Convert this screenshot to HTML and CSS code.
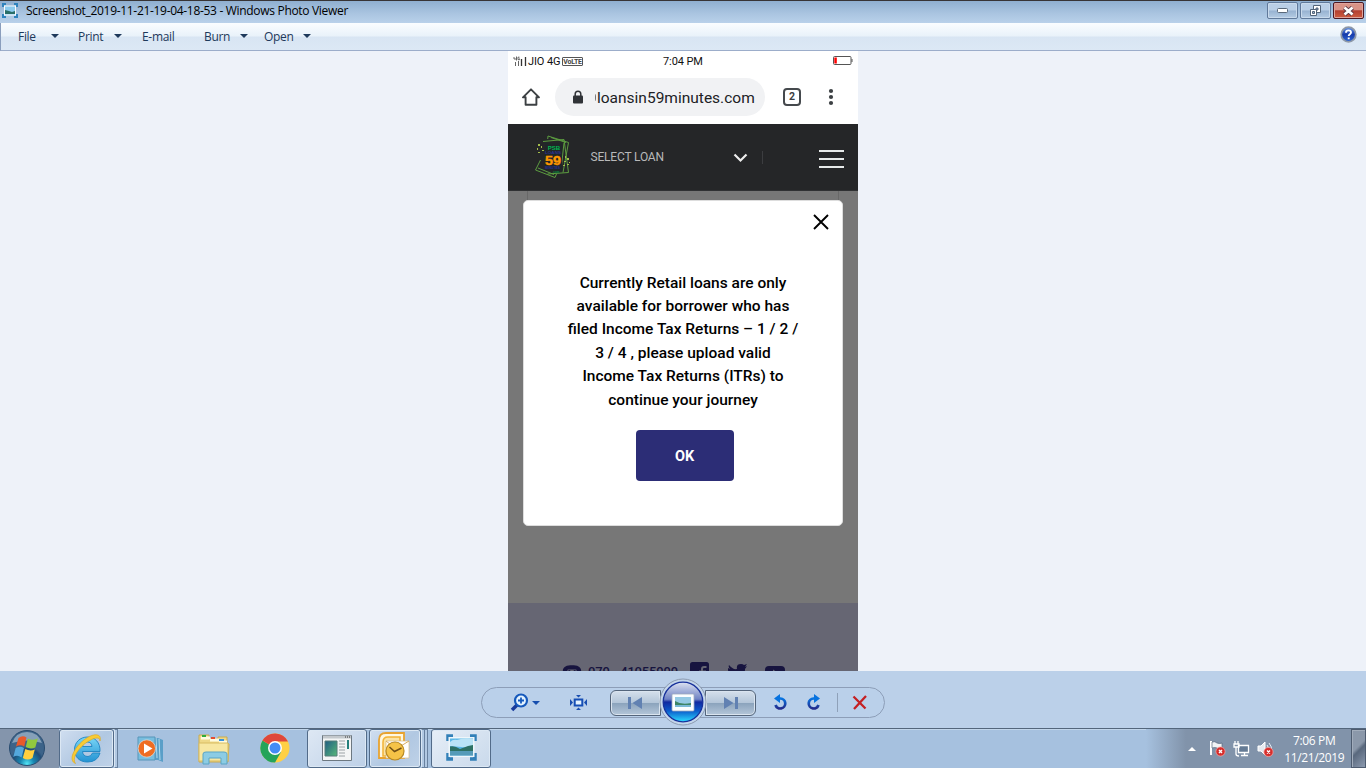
FILE: index.html
```html
<!DOCTYPE html>
<html lang="en">
<head>
<meta charset="utf-8">
<title>Windows Photo Viewer</title>
<link rel="stylesheet" href="styles.css">
</head>
<body>
<div class="screen">
  <header class="titlebar">
    <svg class="app-icon" width="16" height="15" viewBox="0 0 16 15"><path d="M1 4V1h3M12 1h3v3M15 11v3h-3M4 14H1v-3" fill="none" stroke="#2f83bd" stroke-width="2"/><path d="M2 2.500h12v10H2z" fill="#f8fcff"/><path d="M3 3.500h10v8H3z" fill="#8ccbee"/><path d="M3 7l4 1 3 1 3-1v3H3z" fill="#296e68"/></svg>
    <span class="window-title">Screenshot_2019-11-21-19-04-18-53 - Windows Photo Viewer</span>
    <div class="caption-buttons">
      <span class="caption"><svg width="12" height="6"><rect x=".5" y=".5" width="10" height="4" rx="1" fill="#fff" stroke="#596879"/></svg></span>
      <span class="caption"><svg width="13" height="12" viewBox="0 0 13 12"><path d="M4.500.5h7v7h-7z" fill="#fff" stroke="#53657a"/><path d="M7 3h2v2H7z" fill="#829ab7" stroke="#53657a"/><path d="M1.500 4.500h6v6h-6z" fill="#fff" stroke="#53657a"/><path d="M3.500 6.500h2v2h-2z" fill="#9bb3ce" stroke="#53657a"/></svg></span>
      <span class="caption close"><svg width="13" height="10" viewBox="0 0 13 10"><path d="M2.500 1.500l8 7m0-7l-8 7" stroke="#5c3a45" stroke-width="4.400"/><path d="M2.500 1.500l8 7m0-7l-8 7" stroke="#fff" stroke-width="2.600"/></svg></span>
    </div>
  </header>
  <nav class="menubar">
    <span class="menu m-file"><span>File</span><i class="arrow"></i></span>
    <span class="menu m-print"><span>Print</span><i class="arrow"></i></span>
    <span class="menu m-email"><span>E-mail</span></span>
    <span class="menu m-burn"><span>Burn</span><i class="arrow"></i></span>
    <span class="menu m-open"><span>Open</span><i class="arrow"></i></span>
    <svg class="help" width="17" height="17" viewBox="0 0 17 17"><defs><linearGradient id="hg" x2="0" y2="1"><stop stop-color="#6b9bea"/><stop offset=".5" stop-color="#173bab"/><stop offset="1" stop-color="#2d67d5"/></linearGradient></defs><circle cx="8.500" cy="8.500" r="7.300" fill="url(#hg)" stroke="#8d98a8" stroke-width="1.800"/><path d="M6 6.700c0-3.200 5-3 5-.2 0 1.800-2.300 1.800-2.300 3.600M8.700 11.500v1.700" fill="none" stroke="#fff" stroke-width="1.900"/></svg>
  </nav>

  <main class="viewer">
    <div class="phone">
      <div class="statusbar">
        <svg class="signal" width="14" height="11" viewBox="0 0 14 11"><path d="M1 1v2h2M3.500.5v4M6.500 1.200H5v2.500h1.500V2.500M2.500 6v4M5.500 5v5" fill="none" stroke="#555" stroke-width=".9"/><path d="M8.500 3v7M12.500 1v9" stroke="#333" stroke-width="1.300"/></svg>
        <span class="carrier">JIO 4G</span>
        <span class="volte">VoLTE</span>
        <span class="phone-time">7:04 PM</span>
        <svg class="battery" width="20" height="10"><rect x=".5" y=".5" width="17.500" height="8" rx="1" fill="#fff" stroke="#555"/><path d="M19 3v3" stroke="#555"/><path d="M1.300 1.500h2.500v6H1.300z" fill="#f00"/></svg>
      </div>
      <div class="browserbar">
        <svg class="home" width="18" height="18" viewBox="0 0 18 18"><path d="M9 1.300L1 9.300H3.600v7.400h10.800V9.300h2.600z" fill="none" stroke="#3c4043" stroke-width="1.900" stroke-linejoin="round"/></svg>
        <div class="address">
          <svg width="12" height="14" viewBox="0 0 12 14"><path d="M3.200 6V4a2.800 2.800 0 015.600 0v2" fill="none" stroke="#303337" stroke-width="1.500"/><rect x="1" y="5.500" width="10" height="8" rx="1" fill="#303337"/></svg>
          <i class="cut-letter"></i><span class="url">loansin59minutes.com</span>
        </div>
        <span class="tabs">2</span>
        <svg class="dots" width="6" height="18" fill="#3c4043"><circle cx="3" cy="3" r="2.100"/><circle cx="3" cy="9" r="2.100"/><circle cx="3" cy="15" r="2.100"/></svg>
      </div>
      <div class="sitebar">
        <svg class="psb" width="38" height="46" viewBox="0 0 38 46"><g fill="none" stroke="#5c9c40" stroke-width="1"><path d="M9 7.500L30 5.500l4.500 33L13.500 40"/><path d="M14 2l20.500 6.500L29 38.500M14 2l-.3 3M6.500 26L1.500 36l19.500 7.500 1.500-3.500M17 3.500l15 5M4 34l16 6.500"/><path d="M30 9l-3 27"/></g><path d="M11 9l17 0v28l-17-1z" fill="#202628"/><g fill="#a3bd4b"><path d="M4 10h2v2H4zm-1 4h1v2H3zm4-2h1v2H7zm1 4h2v1H8zm-4 2h2v1H4zM30 27h2v1h-2zm3-3h2v2h-2zm-2-2h1v2h-1zm4 6h1v1h-1zm-6 3h2v1h-2zm4-1h2v1h-2z"/></g><g font-family="Liberation Sans" font-weight="700" text-anchor="middle"><text x="20" y="15.500" font-size="6" textLength="12.500" lengthAdjust="spacingAndGlyphs" fill="#00b450">PSB</text><text x="19" y="20" font-size="3.800" textLength="16" lengthAdjust="spacingAndGlyphs" fill="#2c318f">LOANS</text><text x="19" y="30.500" font-size="12.500" textLength="16" lengthAdjust="spacingAndGlyphs" fill="#ff9700" stroke="#ff9700" stroke-width=".4">59</text><text x="18.500" y="35" font-size="3" textLength="15" lengthAdjust="spacingAndGlyphs" fill="#293197">MINUTES</text><text x="22" y="38.500" font-size="3" fill="#00903d">.com</text></g></svg>
        <span class="select">SELECT LOAN</span>
        <svg class="chevron" width="15" height="10" viewBox="0 0 15 10"><path d="M1.500 1.500L7.500 7.500l6-6" fill="none" stroke="#eee" stroke-width="2.200"/></svg>
        <i class="divider"></i>
        <span class="burger"><i></i><i></i><i></i></span>
      </div>
      <div class="page">
        <section class="dialog">
          <svg class="dismiss" width="16" height="16" viewBox="0 0 16 16"><path d="M1 1l14 14M15 1L1 15" stroke="#000" stroke-width="1.900"/></svg>
          <p class="message">Currently Retail loans are only<br>available for borrower who has<br>filed Income Tax Returns – 1 / 2 /<br>3 / 4 , please upload valid<br>Income Tax Returns (ITRs) to<br>continue your journey</p>
          <button class="ok">OK</button>
        </section>
      </div>
      <footer class="site-footer">
        <svg width="20" height="18" viewBox="0 0 20 18"><path d="M.8 7C.8 2.500 5 1.300 10 1.300s9.200 1.200 9.200 5.700l-4.200.8-.8-2.300H5.800L5 7.800z" fill="#17143f"/><path d="M6.500 6.500l3.500 2 3.500-2M4 10v7h12v-7" fill="none" stroke="#17143f" stroke-width="1.500"/></svg>
        <span class="phone-number">079 - 41055999</span>
        <svg class="fb" width="19" height="19" viewBox="0 0 19 19"><rect width="19" height="19" rx="2.500" fill="#17143f"/><path d="M16.500 5H14q-2 0-2 2v12M9 9.500h7" stroke="#666673" stroke-width="2" fill="none"/></svg>
        <svg class="tw" width="19" height="17" viewBox="0 0 19 17"><path d="M1 1q4 5 8 4-1-5 4-5 2 0 3 1l3-1-2 3 2-1-2 3c0 12-11 13-17 9q4 0 5-2-3 0-4-3h2Q-1 7 0 4l2 1Q0 3 1 1z" fill="#17143f"/></svg>
        <svg class="yt" width="20" height="15" viewBox="0 0 20 15"><rect width="20" height="15" rx="4" fill="#17143f"/><path d="M8 3.500l6 4-6 4z" fill="#666673"/></svg>
      </footer>
    </div>
  </main>

  <div class="controls">
    <div class="pill">
      <svg class="zoom" width="19" height="19" viewBox="0 0 19 19"><path d="M7 12l-5 5" stroke="#183a9b" stroke-width="3.500"/><circle cx="11" cy="7.500" r="6" fill="#e4f3ff" stroke="#1659bc" stroke-width="2.200"/><path d="M8 7.500h6m-3-3v6" stroke="#1659bc" stroke-width="1.800"/></svg>
      <i class="arrow blue"></i>
      <svg class="fit" width="17" height="15" viewBox="0 0 17 15"><rect x="4.700" y="4.500" width="7.600" height="6" fill="#e5f3ff" stroke="#164eb5" stroke-width="2"/><path d="M6 0h5L8.500 2.500zm0 15h5l-2.500-2.500zM0 4l3 3.500L0 11zm17 0l-3 3.500L17 11z" fill="#1a4eb0"/></svg>
      <span class="step prev"><svg width="15" height="12" viewBox="0 0 15 12"><path d="M0 0h3v12H0zm14 0v12L4.500 6z" fill="#6181b2"/></svg></span>
      <span class="step next"><svg width="15" height="12" viewBox="0 0 15 12"><path d="M1 0l9.500 6L1 12zm11 0h3v12h-3z" fill="#6181b2"/></svg></span>
      <svg class="rot-left" width="15" height="17" viewBox="0 0 15 17"><defs><linearGradient id="rg" x2="0" y2="1"><stop stop-color="#0874e1"/><stop offset="1" stop-color="#232c8c"/></linearGradient></defs><path d="M5 4.500h2.500a5 5 0 11-5 6.500" fill="none" stroke="url(#rg)" stroke-width="2.700"/><path d="M1 4.500L7 0v9z" fill="#0873df"/></svg>
      <svg class="rot-right" width="15" height="17" viewBox="0 0 15 17"><path d="M10 4.500H7.500a5 5 0 105 6.500" fill="none" stroke="url(#rg)" stroke-width="2.700"/><path d="M14 4.500L8 0v9z" fill="#0873df"/></svg>
      <i class="sep"></i>
      <svg class="delete" width="16" height="16" viewBox="0 0 16 16"><path d="M1.500 1.500l12 12M14 1L2 14" stroke="#c42023" stroke-width="2.300"/></svg>
    </div>
    <svg class="play" width="48" height="48" viewBox="0 0 48 48"><defs><linearGradient id="orb" x2="0" y2="1"><stop stop-color="#dce2f1"/><stop offset=".43" stop-color="#6f82c4"/><stop offset=".5" stop-color="#1129a0"/><stop offset=".72" stop-color="#0b5acb"/><stop offset="1" stop-color="#2cdcff"/></linearGradient></defs><circle cx="24" cy="24" r="23" fill="#c4d6eb" stroke="#8c9bb0"/><circle cx="24" cy="24" r="19.800" fill="url(#orb)" stroke="#17309b" stroke-width="1.300"/><rect x="13" y="16" width="22" height="17" rx="1" fill="#fafdff" stroke="#a0a9bc" stroke-width=".8"/><path d="M16 19h16v10H16z" fill="#94c9e4"/><path d="M16 23q6 4 16 2v4H16z" fill="#3d8465"/><path d="M16 27h16v2H16z" fill="#79b9d6"/></svg>
  </div>

  <footer class="taskbar">
    <div class="start"><svg width="38" height="38" viewBox="0 0 38 38"><defs><radialGradient id="st" cy=".95"><stop stop-color="#53e5f5"/><stop offset=".4" stop-color="#1786b1"/><stop offset=".85" stop-color="#204c76"/><stop offset="1" stop-color="#3c6389"/></radialGradient></defs><circle cx="19" cy="19" r="17.500" fill="url(#st)" stroke="#294c70"/><path d="M4 14Q8 3 19 3t15 11q-14-5-30 0z" fill="#b7c9d9" opacity=".6"/><path d="M10.500 9q4-3 8-.5l-2.300 9q-4-2.500-8.200 0z" fill="#e8592b"/><path d="M19.800 9.500q4 2.500 10 0l-2.500 9q-5 2-9.500-.5z" fill="#91c83e"/><path d="M7.700 19q4.300-2.500 8.300 0l-2.500 9.500q-4-3-8.300-.5z" fill="#54a8dc"/><path d="M17.300 20q4.700 2.500 9.500.5l-2.300 8.500q-4.700 3-9.700 0z" fill="#ffd03d"/></svg></div>
    <div class="task ie"><svg width="31" height="32" viewBox="0 0 31 32"><defs><linearGradient id="ieg" x2="0" y2="1"><stop stop-color="#79d6f7"/><stop offset="1" stop-color="#2493d2"/></linearGradient></defs><path fill-rule="evenodd" d="M29 20q-2.500 9-12.500 9C8 29 3.500 23.500 3.500 16.500S9 4 16.500 4 29.500 9.500 29 18.500H11.500q.5 5 5.500 5 3 0 4.500-3.500zM11.500 13.500H21q-.5-4.500-4.700-4.500t-4.800 4.500z" fill="url(#ieg)" stroke="#1c83c2" stroke-width=".9"/><path d="M4.500 30.500C-2 28 1 18 10.500 9S31.500-1 29 8c0-5-7-3.500-15.500 3C4 19 1.500 26.500 4.500 30.500z" fill="#f8cb35" stroke="#dba51b" stroke-width=".6"/></svg></div><i class="stack"></i>
    <svg class="wmp" width="27" height="28" viewBox="0 0 27 28"><path d="M2 2h19l5 2v22l-5-2H2z" fill="#5a9fc8"/><path d="M19 2l1 20m2-19l1 21" stroke="#b3dcef"/><path d="M1 1h17v23H1z" fill="#78bedf" stroke="#5795b9"/><circle cx="9.800" cy="12.500" r="8.700" fill="#ef6d22" stroke="#d9e6ec" stroke-width=".7"/><path d="M7 7.500l8.500 5-8.500 5z" fill="#fff"/></svg>
    <svg class="explorer" width="33" height="32" viewBox="0 0 33 32"><path d="M2 4V2h10v4h9V4h9v6l2 1-1 18H2z" fill="#eed887" stroke="#c8aa51"/><path d="M4 5h9M13 7h9M22 9h8" stroke="#fffbe1" stroke-width="3"/><path d="M5 3h4" stroke="#30ad39" stroke-width="2"/><path d="M14 5h4" stroke="#e44d31" stroke-width="2"/><path d="M22 7h5" stroke="#3b94dd" stroke-width="2"/><path d="M2 10h29v18H2z" fill="#f7e7a2" stroke="#d8bc63"/><path d="M6 31V21q0-2 3-2h18q3 0 3 2v10h-6v-6H12v6z" fill="#8ccce4" stroke="#5ba5c6"/></svg>
    <svg class="chrome" width="30" height="30" viewBox="0 0 30 30"><circle cx="15" cy="15" r="14.500" fill="#ffd044"/><path d="M15 15L2.500 7.500A14.500 14.500 0 0015 29.500L21 19z" fill="#24a45a"/><path d="M15 15L2.500 7.500A14.500 14.500 0 0128 8.500H15z" fill="#df473b"/><circle cx="15" cy="15" r="7" fill="#fff"/><circle cx="15" cy="15" r="5.500" fill="#438cf5"/></svg>
    <div class="task cmd"><svg width="30" height="26" viewBox="0 0 30 26"><path d="M.5.500h29v25H.5z" fill="#f4f5f5" stroke="#6d7881"/><path d="M1 2h28" stroke="#c3c8cc" stroke-width="3"/><path d="M23 2h1m1 0h1m1 0h1" stroke="#333"/><defs><linearGradient id="cg" x2="1" y2="1"><stop stop-color="#205d84"/><stop offset="1" stop-color="#58b978"/></linearGradient></defs><path d="M3 6h12v15H3z" fill="url(#cg)" stroke="#557c79"/><path d="M17 6h6m-6 3h6m-6 3h6m-6 3h6m-6 3h6m-6 3h6" stroke="#9ca2a5"/><path d="M25 5h2v9h-2z" fill="#26807b"/></svg></div>
    <div class="task outlook"><svg width="33" height="31" viewBox="0 0 33 31"><path d="M2 27V9q0-7 7-7h18v25z" fill="#fff7e0" stroke="#e8a330" stroke-width="1.800"/><path d="M6 25V11q0-5 5-5h12v19z" fill="#fbe3a4" stroke="#f2b336" stroke-width="1.500"/><path d="M9 10h23v17H9z" fill="#fff" stroke="#d9bd8a" stroke-width=".7"/><path d="M9 10l10 8 13-8" fill="none" stroke="#d8ad60"/><circle cx="18" cy="20" r="9" fill="#f5c347" stroke="#b98a23" stroke-width="1.200"/><path d="M12.500 16l5 4.500 7-3.500" fill="none" stroke="#715016" stroke-width="1.500"/></svg></div><i class="stack"></i><i class="stack second"></i>
    <div class="task photo"><svg width="31" height="27" viewBox="0 0 31 27"><path d="M2 7V2h5M24 2h5v5M29 19v6h-5M7 25H2v-6" fill="none" stroke="#3280b8" stroke-width="3.500"/><path d="M2.500 3h26v20h-26z" fill="#eef6fa"/><path d="M4 4.500h23v17H4z" fill="#59b7e7"/><path d="M4 8q3-3 7-2 8-3 16-1v9l-23-2z" fill="#b9e3f6"/><path d="M4 12.500q5-1 10 2.500l8-3 5-1v6H4z" fill="#2d7164"/><path d="M4 17h23v4.500H4z" fill="#559bb8"/></svg></div>
    <div class="tray">
      <svg class="up" width="8" height="4"><path d="M0 4l4-4 4 4z" fill="#fff"/></svg>
      <svg class="flag" width="17" height="17" viewBox="0 0 17 17"><path d="M2 1v14" stroke="#fff" stroke-width="2"/><path d="M3 2q3-1 5 1 3 1 5 0v6q-3 1-5-1-2-1-5 0z" fill="#f2f4f6" stroke="#56677c" stroke-width=".7"/><circle cx="11.500" cy="11.500" r="4.600" fill="#d62e2c" stroke="#faaba7" stroke-width=".7"/><path d="M10 10l3 3m0-3l-3 3" stroke="#fff" stroke-width="1.400"/></svg>
      <svg class="network" width="17" height="16" viewBox="0 0 17 16"><path d="M5.500 4.500h10v7h-10zM8 14.500h7M11.500 12v2" fill="#657b95" stroke="#fff" stroke-width="1.300"/><path d="M2 0v3m3-3v3M1 3h5v3H1zm2 3v7q0 2 3 2" fill="none" stroke="#fff" stroke-width="1.300"/></svg>
      <svg class="sound" width="17" height="16" viewBox="0 0 17 16"><path d="M1 5h3l4-4v13l-4-4H1z" fill="#e5e9ef" stroke="#fff"/><path d="M10 4q3 3 1 7M12 2q4 4 2 9" fill="none" stroke="#e5edf5"/><circle cx="11.500" cy="11" r="4.600" fill="#d62e2c" stroke="#faaba7" stroke-width=".7"/><path d="M10 9.500l3 3m0-3l-3 3" stroke="#fff" stroke-width="1.400"/></svg>
      <div class="clock"><span class="time">7:06 PM</span><span class="date">11/21/2019</span></div>
      <i class="desktop"></i>
    </div>
  </footer>
</div>
</body>
</html>
```
FILE: styles.css
```css
* { box-sizing: border-box; }
body { margin: 0; font-family: "Open Sans", sans-serif; font-size: 12px; overflow: hidden; }
svg { display: block; flex: none; }
.screen { width: 1366px; height: 768px; display: flex; flex-direction: column; background: #eef2f9; overflow: hidden; }
.titlebar { height: 23px; flex: none; display: flex; align-items: flex-start; border-top: 1px solid #373435; background: linear-gradient(#8fafd0, #a9c4e0 55%, #b9d1ea); padding-left: 2px; }
.app-icon { margin-top: 2px; }
.window-title { margin: 1px 0 0 8px; line-height: 18px; font-size: 12px; letter-spacing: -.31px; white-space: nowrap; color: #000; }
.caption-buttons { margin-left: auto; display: flex; gap: 2px; padding: 1px 2px 0 0; }
.caption { width: 31px; height: 17px; border: 1px solid #60799a; border-radius: 2px; box-shadow: inset 0 0 0 1px #c9daec; background: linear-gradient(#bacfe6 48%, #97b2d1 52%, #b5cce4); display: flex; align-items: center; justify-content: center; }
.caption.close { border-color: #4d1823; background: linear-gradient(#d99387 45%, #b33f31 52%, #cf5d40); box-shadow: inset 0 0 0 1px #dea49c; }
.menubar { height: 28px; flex: none; display: flex; align-items: center; border-bottom: 1px solid #9cadca; border-left: 1px solid #8a9ebd; background: linear-gradient(#fafdff, #e9f2fa 48%, #d8e5f3 52%, #dce8f5); color: #1e395b; padding-left: 17px; }
.menu { display: flex; align-items: center; justify-content: space-between; letter-spacing: -.3px; line-height: 16px; margin-top: 1px; }
.m-file { width: 41px; margin-right: 19px; }
.m-print { width: 44px; margin-right: 20px; }
.m-email { width: 62px; }
.m-burn { width: 44px; margin-right: 16px; }
.m-open { width: 47px; }
.arrow { border: 4px solid transparent; border-top-color: #1e395b; border-bottom: 0; margin-top: -2px; }
.help { margin: -4px 9px 0 auto; }
.viewer { height: 620px; flex: none; display: flex; justify-content: center; background: #eef2f9; }
.phone { width: 350px; height: 620px; display: flex; flex-direction: column; background: #fff; font-family: Roboto, sans-serif; overflow: hidden; }
.statusbar { height: 20px; display: flex; align-items: center; padding-left: 5px; flex: none; font-size: 11px; color: #111; }
.carrier { width: 33px; margin: 1px 0 0 1px; white-space: nowrap; letter-spacing: -.1px; }
.volte { width: 21px; height: 9px; margin: 1px 0 0 1px; border: 1px solid #555; border-radius: 1px; color: #444; font-size: 7px; font-weight: 700; line-height: 8px; letter-spacing: -.25px; text-align: center; white-space: nowrap; }
.phone-time { margin: 1px 0 0 80px; width: 41px; white-space: nowrap; letter-spacing: -.1px; }
.battery { margin-left: auto; margin-right: 5px; }
.browserbar { height: 53px; flex: none; display: flex; align-items: center; padding: 0 0 1px 14px; }
.address { width: 210px; height: 38px; border-radius: 19px; background: #f1f2f4; margin-left: 15px; padding-left: 17px; display: flex; align-items: center; color: #202124; }
.cut-letter { width: 2px; height: 7px; border-right: 1px solid #777; border-radius: 50%; margin-left: 10px; }
.url { font-size: 15.5px; letter-spacing: 0; white-space: nowrap; margin: 1px 0 0 1px; }
.tabs { width: 18px; height: 18px; border: 2px solid #45494d; border-radius: 4px; margin-left: 18px; font: bold 10.5px/14px Roboto, sans-serif; text-align: center; color: #3c4043; }
.dots { margin-left: 27px; }
.sitebar { height: 67px; flex: none; background: #252628; display: flex; align-items: center; padding-left: 26px; border-bottom: 1px solid #303133; }
.select { color: #b9b9ba; font-size: 12px; letter-spacing: -.18px; width: 74px; margin: 0 0 0 18.5px; white-space: nowrap; }
.chevron { margin: 1px 0 0 68px; }
.divider { width: 1px; height: 13px; background: #3c3d40; margin-left: 14px; }
.burger { width: 25px; display: flex; flex-direction: column; gap: 6px; margin: 3px 0 0 56px; }
.burger i { height: 2px; background: #e7eaea; }
.page { height: 412px; flex: none; background: linear-gradient(90deg, #777 19px, #686868 19px, #686868 20px, #777 20px, #777 330px, #686868 330px, #686868 331px, #777 331px) 0 0 / 350px 20px no-repeat #777; padding: 9px 15px 0; }
.dialog { height: 326px; width: 320px; background: #fff; border: 1px solid #ddd; border-radius: 5px; display: flex; flex-direction: column; align-items: center; }
.dismiss { align-self: flex-end; margin: 13px 13px 0 0; }
.message { margin: 41.500px 0 0; text-align: center; font-size: 15.5px; line-height: 23.4px; font-weight: 500; color: #000; white-space: nowrap; }
.ok { width: 98px; height: 51px; margin: 18.500px 0 0 3px; padding: 1px 0 0; border: 0; border-radius: 4px; background: #2c2d76; color: #fff; font: bold 14.5px Roboto, sans-serif; }
.site-footer { height: 68px; flex: none; background: #666673; color: #17143f; display: flex; align-items: flex-start; padding: 61px 0 0 54px; overflow: hidden; }
.phone-number { width: 91px; margin-left: 6px; margin-top: -1px; font-size: 13px; font-weight: 500; line-height: 18px; white-space: nowrap; letter-spacing: -.15px; }
.fb { margin: -2px 0 0 11px; }
.tw { margin-left: 19px; }
.yt { margin: 2px 0 0 18px; }
.controls { height: 57px; flex: none; position: relative; background: #bbd0e9; display: flex; justify-content: center; align-items: flex-start; padding-top: 16px; }
.pill { width: 404px; height: 31px; border: 1px solid #8d9eb8; border-radius: 16px; display: flex; align-items: center; padding-left: 28px; background: #bad0ea; }
.blue { border-top-color: #164eae; margin: 1px 0 0 3px; }
.fit { margin-left: 30px; }
.step { width: 51px; height: 26px; display: flex; align-items: center; justify-content: center; background: linear-gradient(#d5e0ec, #b4c6d9 48%, #8ca4bd 52%, #b4c6d9); border: 1px solid #54657b; box-shadow: inset 0 0 0 1px #dae4ef; }
.prev { margin-left: 23px; border-radius: 6px 0 0 6px; }
.next { margin-left: 44px; border-radius: 0 6px 6px 0; }
.rot-left { margin-left: 17px; }
.rot-right { margin-left: 18px; }
.sep { width: 1px; height: 19px; background: #8fa1b9; margin-left: 16px; }
.delete { margin-left: 14px; }
.play { position: absolute; left: 659px; top: 7px; }
.taskbar { height: 40px; flex: none; display: flex; align-items: center; border-top: 1px solid #53667c; background: #a6c1df; box-shadow: inset 0 1px #c2d6eb; }
.start { width: 59px; height: 39px; background: #8495ac; padding-left: 8px; }
.task { height: 39px; border: 1px solid #526b89; border-radius: 3px; box-shadow: inset 0 0 0 1px #dce8f4; background: linear-gradient(135deg, #d0def0, #b1c8e2 55%, #bfd2e8); display: flex; justify-content: center; align-items: center; }
.ie { width: 55px; }
.stack { width: 4px; height: 39px; border: 1px solid #68819f; border-left-color: #d9e7f5; background: #b2c9e3; }
.second { border-left: 0; width: 3px; }
.wmp { margin: 3px 0 0 19px; }
.explorer { margin-left: 33px; }
.chrome { margin: -2px 0 0 30px; }
.cmd { width: 60px; margin-left: 17px; background: linear-gradient(135deg, #dee8f4, #bdd0e7); }
.cmd svg, .photo svg { margin-top: -2px; }
.outlook { width: 52px; margin-left: 2px; }
.outlook svg { margin: -4px 4px 0 0; }
.photo { width: 60px; margin-left: 3px; background: linear-gradient(135deg, #e6eef7, #c9d9eb); }
.tray { margin-left: auto; width: 220px; height: 39px; display: flex; align-items: center; background: linear-gradient(90deg, #a6c1df, #8193aa 40px); color: #fff; }
.up { margin-left: 42px; }
.flag { margin-left: 13px; }
.network { margin-left: 7px; }
.sound { margin-left: 7px; }
.clock { width: 77px; margin-left: 3px; display: flex; flex-direction: column; align-items: center; line-height: 17px; letter-spacing: -.38px; }
.desktop { width: 15px; height: 39px; margin-left: auto; border: 1px solid #4e5c70; box-shadow: inset 1px 1px #a2adbc; background: linear-gradient(135deg, #8b98aa 45%, #59687d 55%, #8d9bb0); }
```
